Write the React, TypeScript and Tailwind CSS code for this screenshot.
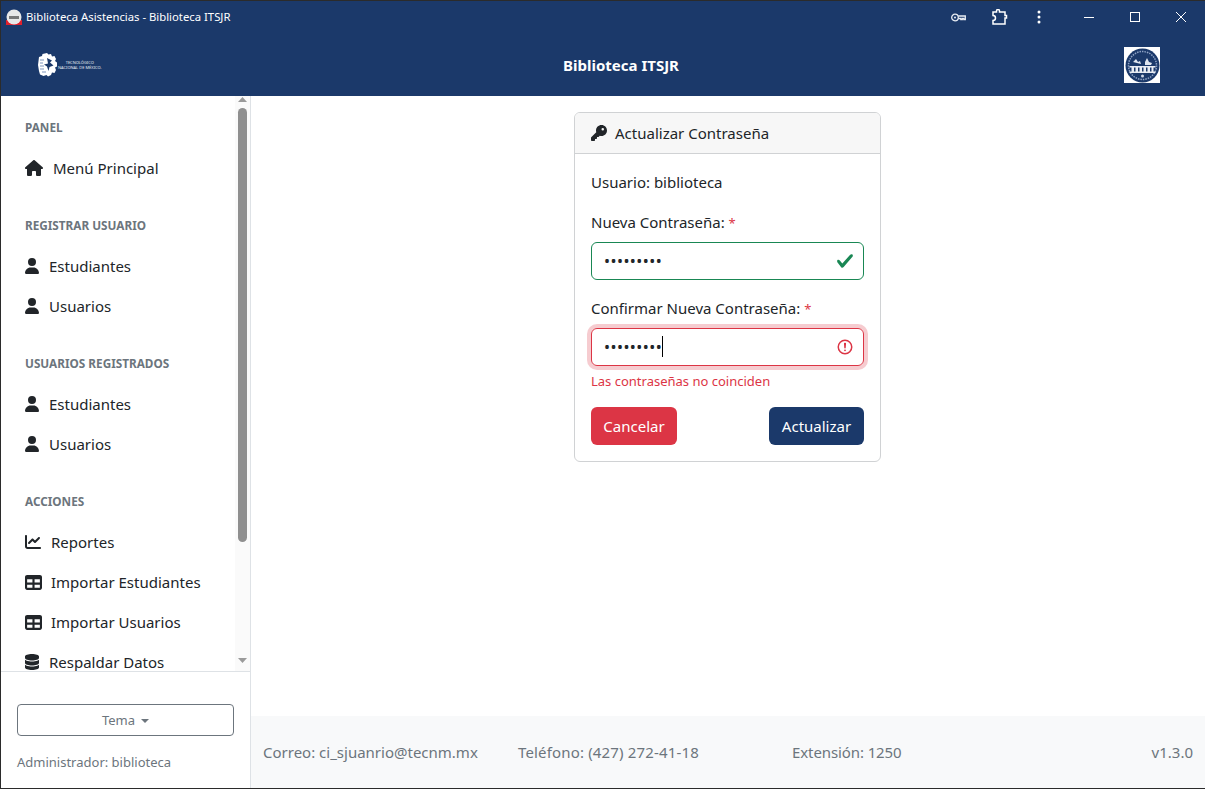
import { FaChartLine, FaDatabase, FaHouse, FaKey, FaTable, FaUser } from "react-icons/fa6";
import type { ReactNode } from "react";

const NavItem = ({ icon, label, gap = "gap-[10px]" }: { icon: ReactNode; label: string; gap?: string }) => (
    <div className={`flex items-center h-10 pl-[24px] text-[15px] text-[#212529] ${gap}`}>
        {icon}
        <span>{label}</span>
    </div>
);

const NavHeading = ({ children, first }: { children: string; first?: boolean }) => (
    <div className={`${first ? "mt-[22px]" : "mt-[28px]"} mb-[12px] pl-[24px] h-[18px] leading-[18px] text-[11.75px] font-bold text-[#6c757d]`}>
        {children}
    </div>
);

const userIcon = <FaUser size={16} className="-ml-[1px] text-[#212529]" />;

const Sidebar = () => (
    <aside className="w-[250px] shrink-0 border-r border-[#dee2e6] bg-white flex flex-col">
        <div className="flex h-[575px] overflow-hidden">
            <nav className="flex-1 overflow-hidden">
                <NavHeading first>PANEL</NavHeading>
                <NavItem icon={<FaHouse size={18} className="text-[#212529]" />} label="Menú Principal" gap="gap-[10px]" />
                <NavHeading>REGISTRAR USUARIO</NavHeading>
                <NavItem icon={userIcon} label="Estudiantes" gap="gap-[9px]" />
                <NavItem icon={userIcon} label="Usuarios" gap="gap-[9px]" />
                <NavHeading>USUARIOS REGISTRADOS</NavHeading>
                <NavItem icon={userIcon} label="Estudiantes" gap="gap-[9px]" />
                <NavItem icon={userIcon} label="Usuarios" gap="gap-[9px]" />
                <NavHeading>ACCIONES</NavHeading>
                <NavItem icon={<FaChartLine size={16} className="text-[#212529]" />} label="Reportes" />
                <NavItem icon={<FaTable size={17} className="text-[#212529]" />} label="Importar Estudiantes" gap="gap-[9px]" />
                <NavItem icon={<FaTable size={17} className="text-[#212529]" />} label="Importar Usuarios" gap="gap-[9px]" />
                <NavItem icon={<FaDatabase size={16} className="-ml-[1px] text-[#212529]" />} label="Respaldar Datos" gap="gap-[9px]" />
            </nav>
            <div className="w-[15px] shrink-0 bg-[#fafafa] flex flex-col items-center">
                <svg width="9" height="5" viewBox="0 0 9 5" className="mt-[1px] mb-[6px]"><path d="M4.500 0 9 5H0z" fill="#9a9a9a" /></svg>
                <div className="w-[9px] h-[434px] rounded-full bg-[#8f8f8f]" />
                <svg width="9" height="5" viewBox="0 0 9 5" className="mt-auto mb-[8px]"><path d="M0 0h9L4.500 5z" fill="#9a9a9a" /></svg>
            </div>
        </div>
        <div className="flex-1 border-t border-[#dee2e6] px-[16px] pt-[32px]">
            <div className="w-[217px] h-[32px] pt-[2px] border border-[#6c757d] rounded-[4px] flex items-center justify-center gap-[6px] text-[13px] text-[#6c757d]">
                Tema
                <span className="w-0 h-0 border-x-[4px] border-x-transparent border-t-[4px] border-t-[#6c757d]" />
            </div>
            <div className="mt-[16px] text-[13px] leading-[21px] text-[#6c757d]">Administrador: biblioteca</div>
        </div>
    </aside>
);

const Seal = () => (
    <div className="w-[36px] h-[36px] bg-white flex items-center justify-center">
        <svg width="35" height="35" viewBox="0 0 35 35">
            <circle cx="17.500" cy="17.500" r="17" fill="#1b396a" />
            <circle cx="17.500" cy="17.500" r="14" fill="none" stroke="#8ea2c4" strokeWidth="1.500" strokeDasharray="1.500 1" />
            <path d="M8 14l3-3 2 3 2-1 1 3M20 14l2-4 2 4 3 1-1 2h-6z" fill="#dfe5ef" />
            <path d="M4.500 18h26v1.500h-2v4h2V25h-26v-1.500h2v-4h-2z" fill="#e8ecf3" />
            <path d="M9 19.500h1.500v4H9zM13 19.500h1.500v4H13zM17 19.500h1.500v4H17zM21 19.500h1.500v4H21zM25 19.500h1.500v4H25z" fill="#1b396a" />
            <circle cx="17.500" cy="28" r="1.500" fill="#cdd6e6" />
        </svg>
    </div>
);

const TecLogo = () => (
    <div className="w-[70px] flex items-center">
        <svg width="19" height="25" viewBox="0 0 19 25" className="shrink-0">
            <path d="M1 4l3-1 .5-2L9 0l1.500 1.500L13 1l1 2.500 2.500-.5L18 6l-1 2 2 1.500v4l-2 1 1 2.500-1.500 3-2.500-.5-1 2.500-3 1.500-1.500-1.500-3 1-3.500-1.500L1 18 0 12z" fill="#fff" />
            <path d="M9 5l5 2.500-2 2 3.500 3-4 1.500-1 4-1.500-4.500-3-2 4-1z" fill="#1b396a" />
            <path d="M2 7h4M2 10h3M2 13h4M2 16h4M4 19h4" stroke="#7f95bb" strokeWidth="1" />
        </svg>
        <div className="ml-[1px] text-[4px] leading-[5px] text-[#e6ebf3] text-center whitespace-nowrap">
            <div>TECNOLÓGICO</div>
            <div>NACIONAL DE MÉXICO.</div>
        </div>
    </div>
);

const TitleBar = () => (
    <div className="h-[30px] pt-[2px] flex items-center text-white">
        <svg width="16" height="16" viewBox="0 0 16 16" className="ml-[5px] mr-[4px]">
            <rect width="16" height="16" fill="#1b396a" />
            <rect y="11" width="16" height="5" fill="#e0202c" />
            <circle cx="8" cy="8" r="7.500" fill="#e8e8e8" />
            <path d="M3 7h10v3H3z" fill="#777" />
        </svg>
        <span className="text-[11.3px]">Biblioteca Asistencias - Biblioteca ITSJR</span>
        <div className="ml-auto flex items-center h-full">
            <svg width="15" height="9" viewBox="0 0 15 9" className="mr-[26px]" fill="none" stroke="#e8ecf3" strokeWidth="1.300">
                <circle cx="4" cy="4.500" r="3.300" />
                <circle cx="4" cy="4.500" r="1" fill="#e8ecf3" stroke="none" />
                <path d="M7.300 3h7v3.500h-1.500V5.500h-1.500v1h-1.500v-1H7.300" />
            </svg>
            <svg width="16" height="16" viewBox="0 0 16 16" className="mr-[29px]" fill="none" stroke="#fff" strokeWidth="1.500">
                <path d="M1 3h3.500V2a1.500 1.500 0 0 1 3 0v1H13v3.500h1.500v2.500H13V15H1v-3.500a2.500 2.500 0 0 0 0-5z" />
            </svg>
            <svg width="4" height="14" viewBox="0 0 4 14" className="mr-[43px]" fill="#fff">
                <circle cx="2" cy="2" r="1.500" /><circle cx="2" cy="7" r="1.500" /><circle cx="2" cy="12" r="1.500" />
            </svg>
            <div className="w-[10px] h-px bg-white mr-[36px]" />
            <div className="w-[10px] h-[10px] border border-white mr-[36px]" />
            <svg width="10" height="10" viewBox="0 0 10 10" className="mr-[19px]" stroke="#fff" strokeWidth="1"><path d="M0 0l10 10M10 0 0 10" /></svg>
        </div>
    </div>
);

const Header = () => (
    <div className="h-[65px] pt-[3px] flex items-center pl-[37px] pr-[45px]">
        <TecLogo />
        <div className="flex-1 text-center text-white font-bold text-[15px] pl-[10px]">Biblioteca ITSJR</div>
        <Seal />
    </div>
);

const UpdatePassword = () => (
    <div className="w-[307px] border border-[#d0d2d4] rounded-[6px] overflow-hidden self-start mt-[16px] bg-white text-[15px] text-[#212529]">
        <div className="h-[41px] bg-[#f7f7f7] border-b border-[#d0d2d4] flex items-center gap-[8px] pl-[16px]">
            <FaKey size={16} />
            <span>Actualizar Contraseña</span>
        </div>
        <div className="p-[16px] pb-[16px] leading-[24px]">
            <div className="mb-[16px]">Usuario: biblioteca</div>
            <label className="block h-[24px] mb-[8px]">Nueva Contraseña: <span className="text-[#dc3545] text-[13px] leading-none">*</span></label>
            <div className="relative mb-[16px]">
                <input type="password" readOnly value="123456789" className="block w-full h-[38px] border border-[#198754] rounded-[6px] px-[12px] outline-none text-[16px] tracking-[0.45px]" />
                <svg width="18" height="18" viewBox="0 0 8 8" className="absolute right-[10px] top-[10px]">
                    <path fill="#198754" d="M2.300 6.730.6 4.530c-.4-1.040.46-1.400 1.100-.8l1.100 1.400 3.400-3.800c.6-.63 1.600-.27 1.200.7l-4 4.600c-.43.5-.8.4-1.100.1z" />
                </svg>
            </div>
            <label className="block h-[24px] mb-[8px]">Confirmar Nueva Contraseña: <span className="text-[#dc3545] text-[13px] leading-none">*</span></label>
            <div className="relative">
                <input type="password" readOnly value="123456789" className="block w-full h-[38px] border border-[#dc3545] rounded-[6px] px-[12px] outline-none text-[16px] tracking-[0.45px] shadow-[0_0_0_4px_rgba(220,53,69,0.25)]" />
                <span className="absolute left-[71px] top-[8px] w-px h-[21px] bg-black" />
                <svg width="18" height="18" viewBox="0 0 12 12" fill="none" stroke="#dc3545" className="absolute right-[10px] top-[10px]">
                    <circle cx="6" cy="6" r="4.500" />
                    <path strokeLinejoin="round" d="M5.800 3.600h.4L6 6.500z" />
                    <circle cx="6" cy="8.200" r=".6" fill="#dc3545" stroke="none" />
                </svg>
            </div>
            <div className="mt-[5px] mb-[15px] text-[13px] leading-[21px] text-[#dc3545]">Las contraseñas no coinciden</div>
            <div className="flex justify-between">
                <div className="w-[86px] h-[38px] rounded-[6px] bg-[#dc3545] text-white flex items-center justify-center">Cancelar</div>
                <div className="w-[95px] h-[38px] rounded-[6px] bg-[#1b396a] text-white flex items-center justify-center">Actualizar</div>
            </div>
        </div>
    </div>
);

const Footer = () => (
    <footer className="h-[72px] bg-[#f8f9fa] flex items-center pl-[12px] pr-[12px] text-[15px] text-[#6c757d]">
        <span className="w-[255px]">Correo: ci_sjuanrio@tecnm.mx</span>
        <span className="w-[274px] tracking-[0.16px]">Teléfono: (427) 272-41-18</span>
        <span className="tracking-[-0.1px]">Extensión: 1250</span>
        <span className="ml-auto">v1.3.0</span>
    </footer>
);

export default function App() {
    return (
        <div className="w-[1205px] h-[789px] overflow-hidden flex flex-col bg-[#1b396a] border-t border-b border-l border-[#2b2b2b] font-['Noto_Sans',sans-serif]">
            <TitleBar />
            <Header />
            <div className="flex-1 flex bg-white min-h-0">
                <Sidebar />
                <main className="flex-1 flex flex-col min-w-0">
                    <div className="flex-1 flex justify-center pr-[1px]">
                        <UpdatePassword />
                    </div>
                    <Footer />
                </main>
            </div>
        </div>
    );
}
